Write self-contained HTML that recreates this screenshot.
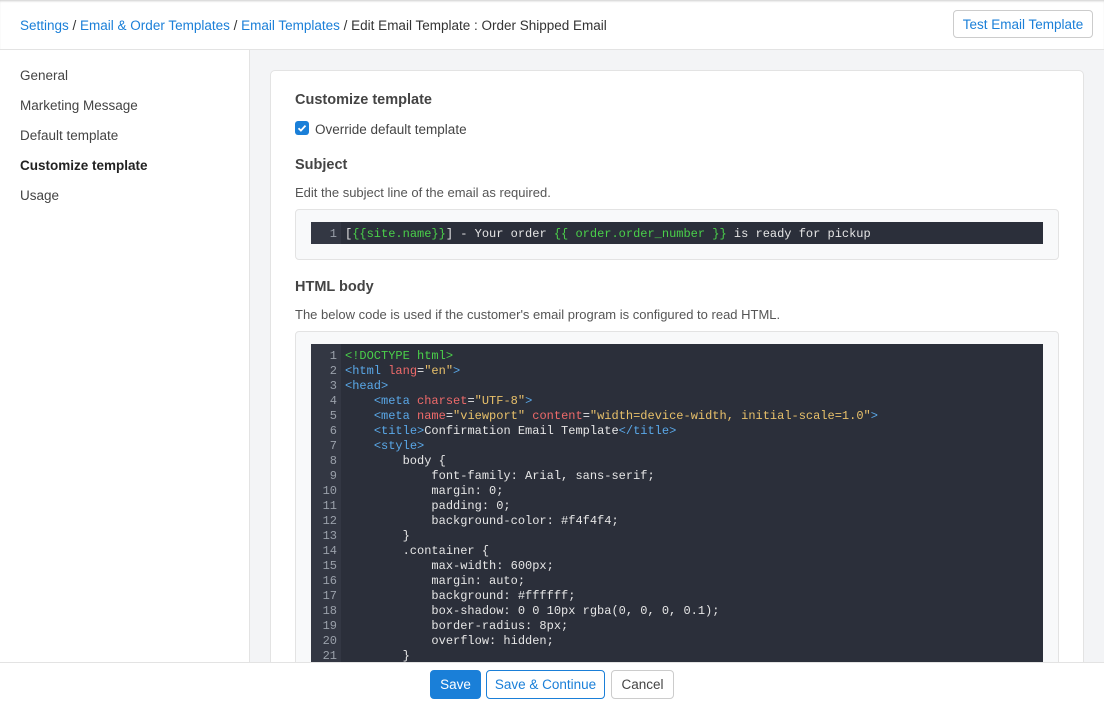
<!DOCTYPE html>
<html><head><style>
*{box-sizing:border-box;margin:0;padding:0}
body{width:1104px;height:705px;overflow:hidden;background:#f3f4f6;font-family:"Liberation Sans",sans-serif;font-size:13px;color:#333;position:relative}
.top{position:absolute;left:0;top:0;width:1104px;height:50px;background:#fff;border-bottom:1px solid #e3e3e3;box-shadow:inset 0 2px 2px -1px #ccc}
.bc{position:absolute;left:20px;top:18px;font-size:13.5px;color:#333}
.bc a{color:#1a7fd8;text-decoration:none}
.test{position:absolute;left:953px;top:10px;width:140px;height:28px;border:1px solid #ccc;border-radius:4px;color:#1a7fd8;font-size:13.5px;text-align:center;line-height:27px;background:#fff}
.side{position:absolute;left:0;top:50px;width:250px;height:612px;background:#fff;border-right:1px solid #e3e3e3}
.side div{position:absolute;left:20px;font-size:13.5px;color:#444}
.card{position:absolute;left:270px;top:70px;width:814px;height:620px;background:#fff;border:1px solid #e3e3e3;border-radius:5px}
h3{position:absolute;left:295px;font-size:14.5px;font-weight:bold;color:#444}
.p{position:absolute;left:295px;font-size:13px;color:#555}
.box{position:absolute;left:295px;width:764px;background:#f8f9fa;border:1px solid #e3e3e3;border-radius:4px}
.ed{position:absolute;left:311px;width:732px;background:#2b2f3a;font-family:"Liberation Mono",monospace;font-size:12px;color:#e6e6e6;white-space:pre}
.gut{position:absolute;left:0;top:0;bottom:0;width:30px;background:#333743}
.ln{position:absolute;left:0;width:26px;text-align:right;color:#9aa0aa}
.cd{position:absolute;left:34px}
.g{color:#4ad04a}.t{color:#5aa8e8}.a{color:#ee6a6a}.s{color:#e8c06a}
.foot{position:absolute;left:0;top:662px;width:1104px;height:43px;background:#fff;border-top:1px solid #e3e3e3}
.btn{position:absolute;top:670px;height:29px;border-radius:4px;font-size:13.5px;text-align:center;line-height:28px}
</style></head><body>
<div class="top"><div class="bc"><a>Settings</a> / <a>Email &amp; Order Templates</a> / <a>Email Templates</a> / Edit Email Template : Order Shipped Email</div><div class="test">Test Email Template</div></div>
<div class="side">
<div style="top:18px">General</div><div style="top:48px">Marketing Message</div><div style="top:78px">Default template</div><div style="top:108px;color:#222;font-weight:bold">Customize template</div><div style="top:138px">Usage</div>
</div>
<div class="card"></div>
<h3 style="top:92px">Customize template</h3>
<div style="position:absolute;left:295px;top:121px;width:14px;height:14px;background:#1a7fd8;border-radius:3px"><svg width="14" height="14"><path d="M3.5 7.2l2.4 2.4 4.6-5" stroke="#fff" stroke-width="1.8" fill="none"/></svg></div>
<div class="p" style="left:315px;top:122px;color:#444;font-size:13.5px">Override default template</div>
<h3 style="top:157px">Subject</h3>
<div class="p" style="top:185px">Edit the subject line of the email as required.</div>
<div class="box" style="top:209px;height:51px"></div>
<div class="ed" style="top:222px;height:22px"><div class="gut"></div><div class="ln" style="top:5px">1</div><div class="cd" style="top:5px">[<span class="g">{{site.name}}</span>] - Your order <span class="g">{{ order.order_number }}</span> is ready for pickup</div></div>
<h3 style="top:279px">HTML body</h3>
<div class="p" style="top:307px">The below code is used if the customer's email program is configured to read HTML.</div>
<div class="box" style="top:331px;height:340px"></div>
<div class="ed" style="top:344px;height:318px;line-height:15px"><div class="gut"></div><div class="ln" style="top:5px">1
2
3
4
5
6
7
8
9
10
11
12
13
14
15
16
17
18
19
20
21</div><div class="cd" style="top:5px"><span class="g">&lt;!DOCTYPE html&gt;</span>
<span class="t">&lt;html</span> <span class="a">lang</span>=<span class="s">"en"</span><span class="t">&gt;</span>
<span class="t">&lt;head&gt;</span>
    <span class="t">&lt;meta</span> <span class="a">charset</span>=<span class="s">"UTF-8"</span><span class="t">&gt;</span>
    <span class="t">&lt;meta</span> <span class="a">name</span>=<span class="s">"viewport"</span> <span class="a">content</span>=<span class="s">"width=device-width, initial-scale=1.0"</span><span class="t">&gt;</span>
    <span class="t">&lt;title&gt;</span>Confirmation Email Template<span class="t">&lt;/title&gt;</span>
    <span class="t">&lt;style&gt;</span>
        body {
            font-family: Arial, sans-serif;
            margin: 0;
            padding: 0;
            background-color: #f4f4f4;
        }
        .container {
            max-width: 600px;
            margin: auto;
            background: #ffffff;
            box-shadow: 0 0 10px rgba(0, 0, 0, 0.1);
            border-radius: 8px;
            overflow: hidden;
        }</div></div>
<div class="foot"></div>
<div class="btn" style="left:430px;width:51px;background:#1a7fd8;color:#fff;border:1px solid #1a7fd8">Save</div>
<div class="btn" style="left:486px;width:119px;background:#fff;color:#1a7fd8;border:1px solid #1a7fd8">Save &amp; Continue</div>
<div class="btn" style="left:611px;width:63px;background:#fff;color:#444;border:1px solid #ccc">Cancel</div>
</body></html>
